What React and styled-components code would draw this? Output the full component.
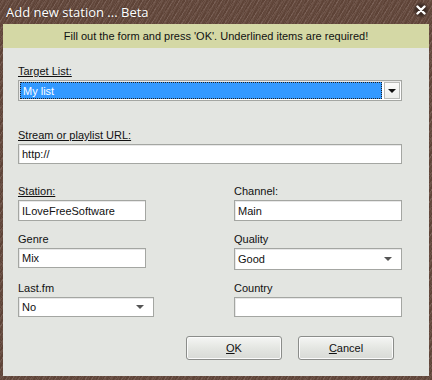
import React from 'react';
import styled, { createGlobalStyle } from 'styled-components';

const Global = createGlobalStyle`
  html, body { margin: 0; padding: 0; background: #5b4236; }
  body { font-family: "Liberation Sans", "DejaVu Sans", sans-serif; }
`;

// brown streaky frame around the whole dialog
const Frame = styled.div`
  width: 432px;
  height: 380px;
  box-sizing: border-box;
  padding: 0 3px 4px 3px;
  display: flex;
  flex-direction: column;
  background:
    repeating-linear-gradient(115deg, rgba(255,255,255,0.06) 0 1px, transparent 1px 3px),
    repeating-linear-gradient(125deg, #5e4337 0 2px, #70554a 2px 3px, #63483c 3px 5px);
`;

const TitleBar = styled.div`
  height: 24px;
  display: flex;
  align-items: center;
  justify-content: space-between;
  padding: 0 0 0 3px;
  color: #fff;
  font-family: "Open Sans", "DejaVu Sans", sans-serif;
  font-size: 13px;
  text-shadow: 0 0 2px rgba(0,0,0,0.4);
`;

const Close = styled.div`
  width: 16px;
  height: 16px;
  border-radius: 50%;
  background: radial-gradient(circle, #3d2c25 40%, rgba(61,44,37,0) 75%);
  display: flex;
  align-items: center;
  justify-content: center;
  margin-top: -4px;
`;

const Banner = styled.div`
  height: 24px;
  display: flex;
  align-items: center;
  justify-content: center;
  background: #d4d8a5;
  color: #111;
  font-size: 11px;
`;

const Body = styled.div`
  flex: 1;
  background: #e3e5e1;
  padding: 16px 27px 0 15px;
  font-size: 11px;
  color: #111;
`;

const Label = styled.div`
  height: 14px;
  line-height: 14px;
  margin-bottom: 2px;
  text-decoration: ${p => (p.$req ? 'underline' : 'none')};
`;

const Field = styled.div`
  margin-bottom: ${p => p.$gap || 0}px;
`;

const Input = styled.div`
  box-sizing: border-box;
  width: ${p => (p.$w ? p.$w + 'px' : '100%')};
  height: ${p => p.$h || 20}px;
  background: #fff;
  border: 1px solid #a4a6a2;
  box-shadow: inset 1px 1px 0 #e8e8e8;
  padding: 0 3px;
  display: flex;
  align-items: center;
  justify-content: space-between;
  white-space: nowrap;
`;

const Highlight = styled.div`
  flex: 1;
  height: 17px;
  margin-left: -2px;
  background: #3399ff;
  outline: 1px dotted #222;
  outline-offset: -1px;
  color: #fff;
  display: flex;
  align-items: center;
  padding-left: 3px;
`;

const DropBtn = styled.div`
  width: 16px;
  height: 17px;
  margin-left: 2px;
  margin-right: -2px;
  box-sizing: border-box;
  border: 1px solid #b9bbb8;
  background: linear-gradient(#fbfbfb, #eceeeb);
  display: flex;
  align-items: center;
  justify-content: center;
`;

const Arrow = styled.div`
  width: 0;
  height: 0;
  border-left: 4px solid transparent;
  border-right: 4px solid transparent;
  border-top: 4px solid ${p => p.$c || '#111'};
  margin-right: ${p => p.$mr || 0}px;
`;

const Grid = styled.div`
  display: grid;
  grid-template-columns: 216px 168px;
  row-gap: 11px;
`;

const Buttons = styled.div`
  display: flex;
  justify-content: flex-end;
  gap: 16px;
  margin-top: 19px;
  margin-right: 8px;
`;

const Button = styled.div`
  width: 96px;
  height: 24px;
  box-sizing: border-box;
  border: 1px solid #8b8d8a;
  border-radius: 3px;
  background: linear-gradient(#f5f6f4, #e4e6e2 50%, #d8dad6);
  box-shadow: inset 0 0 0 1px #fbfbfb;
  display: flex;
  align-items: center;
  justify-content: center;
  u { text-decoration: underline; }
`;

export default function App() {
  return (
    <>
      <Global />
      <Frame>
        <TitleBar>
          <span>Add new station ... Beta</span>
          <Close>
            <svg width="10" height="10" viewBox="0 0 10 10">
              <path d="M1.5 1.5 L8.5 8.5 M8.5 1.5 L1.5 8.5" stroke="#fff" strokeWidth="2.4" strokeLinecap="round" />
            </svg>
          </Close>
        </TitleBar>
        <Banner>Fill out the form and press 'OK'. Underlined items are required!</Banner>
        <Body>
          <Field $gap={27}>
            <Label $req>Target List:</Label>
            <Input $h={21}>
              <Highlight>My list</Highlight>
              <DropBtn><Arrow /></DropBtn>
            </Input>
          </Field>
          <Field $gap={20}>
            <Label $req>Stream or playlist URL:</Label>
            <Input>http://</Input>
          </Field>
          <Grid>
            <Field>
              <Label $req>Station:</Label>
              <Input $w={128} $h={21}>ILoveFreeSoftware</Input>
            </Field>
            <Field>
              <Label>Channel:</Label>
              <Input $h={21}>Main</Input>
            </Field>
            <Field>
              <Label>Genre</Label>
              <Input $w={128}>Mix</Input>
            </Field>
            <Field>
              <Label>Quality</Label>
              <Input $h={22}>Good<Arrow $c="#555" $mr={6} /></Input>
            </Field>
            <Field>
              <Label>Last.fm</Label>
              <Input $w={136}>No<Arrow $c="#555" $mr={6} /></Input>
            </Field>
            <Field>
              <Label>Country</Label>
              <Input></Input>
            </Field>
          </Grid>
          <Buttons>
            <Button><span><u>O</u>K</span></Button>
            <Button><span><u>C</u>ancel</span></Button>
          </Buttons>
        </Body>
      </Frame>
    </>
  );
}
